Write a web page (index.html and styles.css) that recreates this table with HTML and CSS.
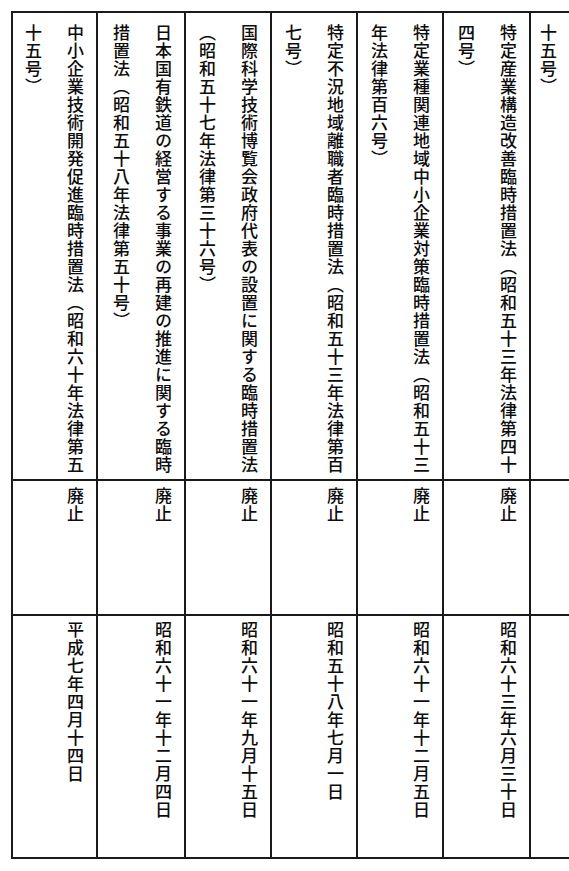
FILE: index.html
```html
<!DOCTYPE html>
<html lang="ja">
<head>
<meta charset="utf-8">
<title>表</title>
<link rel="stylesheet" href="styles.css">
</head>
<body>
<div class="table">
  <div class="col w40">
    <div class="cell r1"><p class="txt">十五号）</p></div>
    <div class="cell r2"></div>
    <div class="cell r3"></div>
  </div>
  <div class="col w87">
    <div class="cell r1"><p class="txt">特定産業構造改善臨時措置法（昭和五十三年法律第四十<br>四号）</p></div>
    <div class="cell r2"><p class="txt">廃止</p></div>
    <div class="cell r3"><p class="txt">昭和六十三年六月三十日</p></div>
  </div>
  <div class="col w86">
    <div class="cell r1"><p class="txt">特定業種関連地域中小企業対策臨時措置法（昭和五十三<br>年法律第百六号）</p></div>
    <div class="cell r2"><p class="txt">廃止</p></div>
    <div class="cell r3"><p class="txt">昭和六十一年十二月五日</p></div>
  </div>
  <div class="col w86">
    <div class="cell r1"><p class="txt">特定不況地域離職者臨時措置法（昭和五十三年法律第百<br>七号）</p></div>
    <div class="cell r2"><p class="txt">廃止</p></div>
    <div class="cell r3"><p class="txt">昭和五十八年七月一日</p></div>
  </div>
  <div class="col w86">
    <div class="cell r1"><p class="txt">国際科学技術博覧会政府代表の設置に関する臨時措置法<br>（昭和五十七年法律第三十六号）</p></div>
    <div class="cell r2"><p class="txt">廃止</p></div>
    <div class="cell r3"><p class="txt">昭和六十一年九月十五日</p></div>
  </div>
  <div class="col w88">
    <div class="cell r1"><p class="txt">日本国有鉄道の経営する事業の再建の推進に関する臨時<br>措置法（昭和五十八年法律第五十号）</p></div>
    <div class="cell r2"><p class="txt">廃止</p></div>
    <div class="cell r3"><p class="txt">昭和六十一年十二月四日</p></div>
  </div>
  <div class="col w85">
    <div class="cell r1"><p class="txt">中小企業技術開発促進臨時措置法（昭和六十年法律第五<br>十五号）</p></div>
    <div class="cell r2"><p class="txt">廃止</p></div>
    <div class="cell r3"><p class="txt">平成七年四月十四日</p></div>
  </div>
</div>
</body>
</html>
```

FILE: styles.css
```css
html, body {
  margin: 0;
  padding: 0;
  background: #ffffff;
}

body {
  width: 569px;
  height: 871px;
  overflow: hidden;
  font-family: "Noto Sans CJK JP", "Noto Sans CJK SC", sans-serif;
  color: #0d0d0d;
}

.table {
  display: flex;
  flex-direction: row-reverse;
  width: 558px;
  margin: 11px 0 0 11px;
  border-top: 2px solid #1a1a1a;
  border-bottom: 2px solid #1a1a1a;
}

.col {
  display: flex;
  flex-direction: column;
  box-sizing: border-box;
  border-left: 2px solid #1a1a1a;
  flex: none;
}

.w40 { width: 40px; }
.w85 { width: 85px; }
.w86 { width: 86px; }
.w87 { width: 87px; }
.w88 { width: 88px; }

.cell {
  position: relative;
  overflow: hidden;
}

.r1 { height: 466px; }
.r2 { height: 133px; border-top: 2px solid #1a1a1a; }
.r3 { height: 241px; border-top: 2px solid #1a1a1a; }

.txt {
  writing-mode: vertical-rl;
  margin: 0;
  width: 100%;
  height: 100%;
  box-sizing: border-box;
  font-size: 17px;
  font-weight: 500;
  letter-spacing: 1px;
  line-height: 42px;
  white-space: nowrap;
}

.r1 .txt { padding-top: 11px; }
.r2 .txt { padding-top: 6px; }
.r3 .txt { padding-top: 5px; }
```
